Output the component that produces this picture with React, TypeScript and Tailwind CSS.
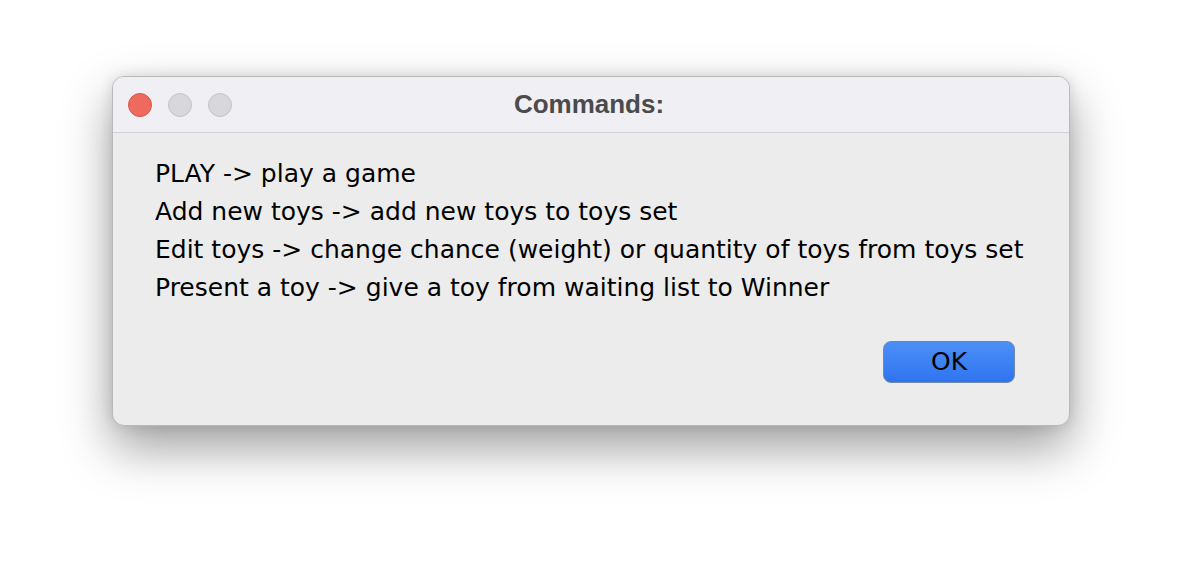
export default function App() {
  const lines = [
    "PLAY -> play a game",
    "Add new toys -> add new toys to toys set",
    "Edit toys -> change chance (weight) or quantity of toys from toys set",
    "Present a toy -> give a toy from waiting list to Winner",
  ];

  return (
    <div className="h-[574px] w-[1182px] overflow-hidden bg-white pl-[112px] pt-[76px]">
      <div className="flex h-[350px] w-[958px] flex-col overflow-hidden rounded-[12px] border border-[#b9b9b9] bg-[#ececec] shadow-[0_22px_50px_rgba(0,0,0,0.38),0_0_14px_rgba(0,0,0,0.12)]">
        {/* title bar */}
        <div className="relative flex h-[56px] shrink-0 items-center border-b border-[#d2d2d4] bg-[#f0eff3]">
          <div className="flex items-center gap-[16px] pl-[15px]">
            <span className="h-[24px] w-[24px] rounded-full border border-[#d9534b] bg-[#ee6a5e]" />
            <span className="h-[24px] w-[24px] rounded-full border border-[#c4c3c8] bg-[#d8d7dc]" />
            <span className="h-[24px] w-[24px] rounded-full border border-[#c4c3c8] bg-[#d8d7dc]" />
          </div>
          <div className="absolute inset-0 flex items-center justify-center pr-[4px] font-['Liberation_Sans',Arial,sans-serif] text-[26px] font-bold text-[#4b4b4d]">
            Commands:
          </div>
        </div>

        {/* body */}
        <div className="flex flex-1 flex-col px-[42px] pt-[22px]">
          <div className="font-['DejaVu_Sans',sans-serif] text-[25px] leading-[38px] text-black">
            {lines.map((l) => (
              <div key={l}>{l}</div>
            ))}
          </div>
          <div className="mt-[34px] flex justify-end pr-[12px]">
            <button className="h-[42px] w-[132px] rounded-[8px] border border-[#7088a8] bg-gradient-to-b from-[#4c8ff8] to-[#2f74ef] font-['DejaVu_Sans',sans-serif] text-[25px] text-black">
              OK
            </button>
          </div>
        </div>
      </div>
    </div>
  );
}
